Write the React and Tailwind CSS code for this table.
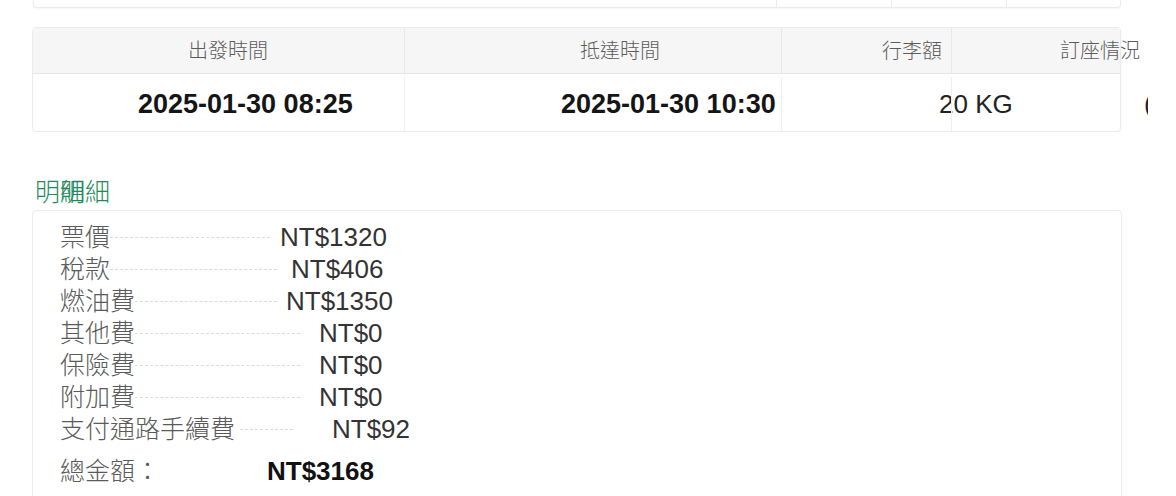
import React from "react";

const FONT = { fontFamily: '"Liberation Sans", "Noto Sans CJK TC", sans-serif' };

const rows = [
  { label: "票價", value: "NT$1320", box: "w-[210px]", gap: "ml-[10px]", dot: "ml-0" },
  { label: "稅款", value: "NT$406", box: "w-[217px]", gap: "ml-[14px]", dot: "ml-0" },
  { label: "燃油費", value: "NT$1350", box: "w-[217px]", gap: "ml-[9px]", dot: "ml-0" },
  { label: "其他費", value: "NT$0", box: "w-[240px]", gap: "ml-[19px]", dot: "ml-0" },
  { label: "保險費", value: "NT$0", box: "w-[240px]", gap: "ml-[19px]", dot: "ml-0" },
  { label: "附加費", value: "NT$0", box: "w-[240px]", gap: "ml-[19px]", dot: "ml-0" },
  { label: "支付通路手續費", value: "NT$92", box: "w-[233px]", gap: "ml-[39px]", dot: "ml-[5px]" },
];

export default function App() {
  return (
    <div className="w-[1176px] h-[496px] overflow-hidden bg-white" style={FONT}>
      {/* top card remnant */}
      <div className="ml-[33px] w-[1088px] h-[8px] border-x border-b border-[#ebebeb] rounded-b-[4px] shadow-[0_1px_2px_rgba(0,0,0,0.04)] grid grid-cols-[742px_115px_115px_minmax(0,1fr)]">
        <div />
        <div className="border-l border-[#ebebeb]" />
        <div className="border-l border-[#ebebeb]" />
        <div className="border-l border-[#ebebeb]" />
      </div>

      {/* flight table */}
      <div className="mt-[19px] ml-[32px] w-[1116px] overflow-hidden">
        <div className="w-[1089px] border border-[#ebebeb] rounded-[4px] shadow-[0_1px_3px_rgba(0,0,0,0.05)]">
          <div className="grid grid-cols-[371px_377px_170px_minmax(0,1fr)] h-[46px] bg-[#f6f6f6] border-b border-[#e6e6e6] text-[20px] text-[#5c5c5c] font-light">
            <div className="flex items-center pl-[155px] whitespace-nowrap">出發時間</div>
            <div className="flex items-center pl-[175px] border-l border-[#e9e9e9] whitespace-nowrap">抵達時間</div>
            <div className="flex items-center pl-[100px] border-l border-[#e9e9e9] whitespace-nowrap">行李額</div>
            <div className="flex items-center pl-[108px] border-l border-[#e9e9e9] whitespace-nowrap">訂座情況</div>
          </div>
          <div className="grid grid-cols-[371px_377px_170px_minmax(0,1fr)] h-[57px] pt-[3px] text-[26px] text-[#151515]">
            <div className="flex items-center pl-[105px] text-[27px] font-bold whitespace-nowrap">2025-01-30 08:25</div>
            <div className="flex items-center pl-[156px] text-[27px] font-bold border-l border-[#efefef] whitespace-nowrap">2025-01-30 10:30</div>
            <div className="flex items-center pl-[157px] border-l border-[#efefef] whitespace-nowrap text-[#222]">20 KG</div>
            <div className="flex items-center pl-[192px] border-l border-[#efefef] whitespace-nowrap text-[#222]">(</div>
          </div>
        </div>
      </div>

      {/* detail title */}
      <div className="mt-[45px] ml-[35px] relative h-[30px] text-[25px] leading-[30px] text-[#23895c] font-light">
        <span>明細</span>
        <span className="absolute left-[25px] top-0">明細</span>
      </div>

      {/* detail card */}
      <div className="mt-[3px] ml-[32px] w-[1090px] h-[300px] border border-[#ececec] rounded-[4px] pt-[10px] pl-[27px]">
        {rows.map((r) => (
          <div key={r.label} className="flex items-center h-[32px] leading-[32px]">
            <div className={`${r.box} flex items-center text-[25px]`}>
              <span className="text-[#5a5a5a] font-light whitespace-nowrap">{r.label}</span>
              <span className={`${r.dot} flex-1 border-t border-dashed border-[#dadada]`} />
            </div>
            <span className={`${r.gap} text-[26px] text-[#333] whitespace-nowrap`}>{r.value}</span>
          </div>
        ))}
        <div className="flex items-center h-[32px] mt-[10px] leading-[32px]">
          <div className="w-[207px] text-[25px] text-[#5a5a5a] font-light whitespace-nowrap">總金額：</div>
          <span className="text-[26px] font-bold text-[#111] whitespace-nowrap">NT$3168</span>
        </div>
      </div>
    </div>
  );
}
